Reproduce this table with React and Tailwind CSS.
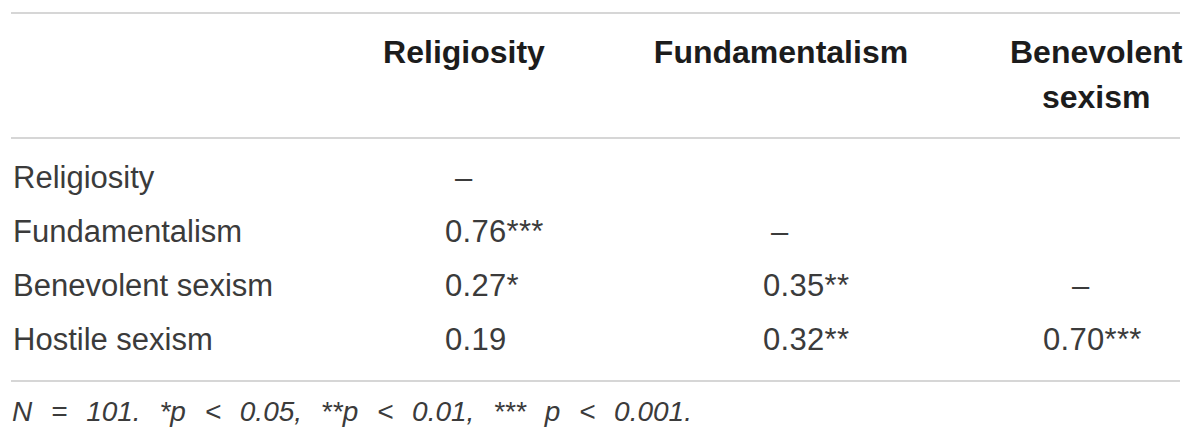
const rows = [
    { label: "Religiosity", cells: ["—", "", ""] },
    { label: "Fundamentalism", cells: ["0.76***", "—", ""] },
    { label: "Benevolent sexism", cells: ["0.27*", "0.35**", "—"] },
    { label: "Hostile sexism", cells: ["0.19", "0.32**", "0.70***"] },
]

const dashPad = ["pl-[10px]", "pl-[8px]", "pl-[29px]"]

const Cell = ({ value, col }) => {
    if (value === "—") {
        return <div className={dashPad[col]}>–</div>
    }
    return <div className="whitespace-nowrap tracking-[0.3px]">{value}</div>
}

const App = () => {
    return (
        <div className="w-[1200px] h-[442px] bg-white pt-[12px] font-['Liberation_Sans',Arial,sans-serif] overflow-hidden">
            <div className="ml-[11px] w-[1169px]">
                <div className="border-t-2 border-[#d6d6d6] pt-[16px] pb-[17px] grid grid-cols-[289px_328px_306px_1fr] text-[32px] leading-[45px] font-bold text-[#1c1c1c]">
                    <div></div>
                    <div className="text-center">Religiosity</div>
                    <div className="text-center">Fundamentalism</div>
                    <div className="pl-[76px] text-center whitespace-nowrap">
                        Benevolent
                        <br />
                        sexism
                    </div>
                </div>

                <div className="border-t-2 border-[#d6d6d6] pt-[12px] pb-[13px] text-[31px] leading-[54px] text-[#3b3b3b]">
                    {rows.map((row) => (
                        <div key={row.label} className="grid grid-cols-[434px_318px_280px_1fr]">
                            <div className="pl-[2px]">{row.label}</div>
                            {row.cells.map((c, i) => (
                                <Cell key={i} value={c} col={i} />
                            ))}
                        </div>
                    ))}
                </div>

                <div className="border-t-2 border-[#d6d6d6] pt-[10px] pl-[1px] text-[28px] leading-[40px] italic text-[#3b3b3b] [word-spacing:11px]">
                    N = 101. *p &lt; 0.05, **p &lt; 0.01, *** p &lt; 0.001.
                </div>
            </div>
        </div>
    )
}

export default App
